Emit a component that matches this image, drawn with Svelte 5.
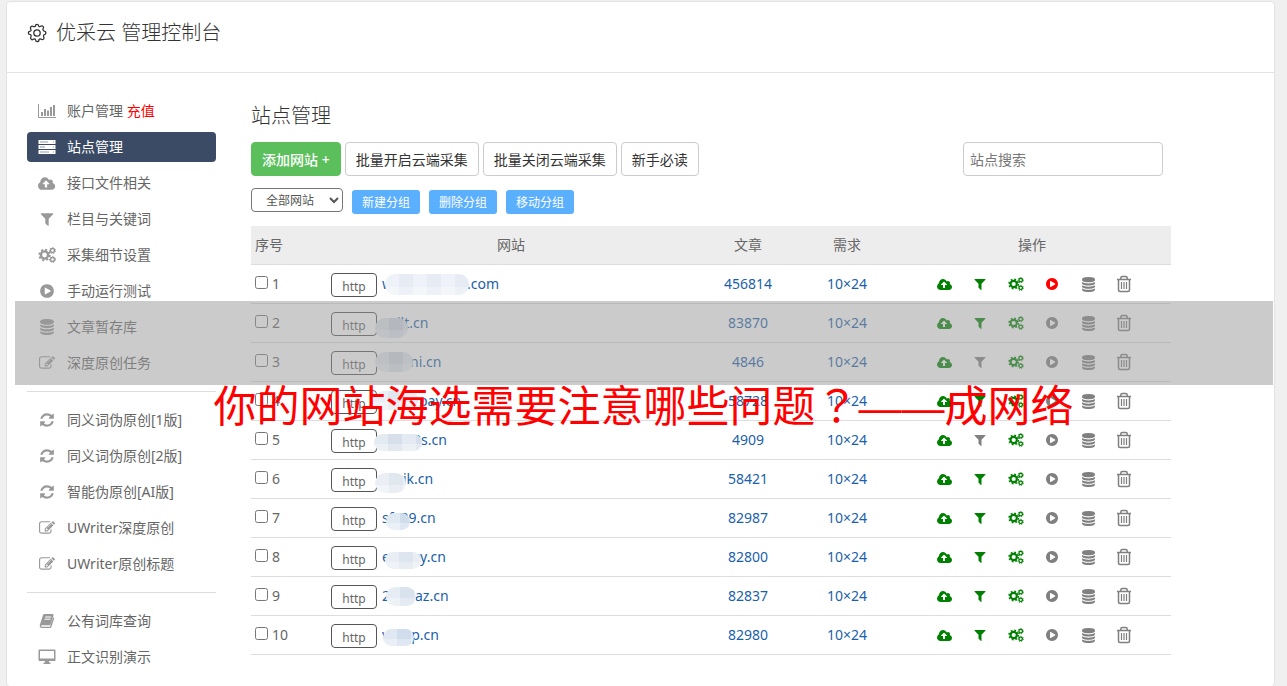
<script lang="ts">
	interface Site {
		id: number;
		pre: string;
		gap: number;
		post: string;
		// redaction blob, relative to the start of the domain
		mask: { x: number; y: number; w: number; h: number; tone: string };
		articles: number;
		filtered: boolean;
		running: boolean;
	}

	const menu = [
		[
			{ label: '账户管理', icon: 'chart', extra: '充值' },
			{ label: '站点管理', icon: 'server', active: true },
			{ label: '接口文件相关', icon: 'cloud' },
			{ label: '栏目与关键词', icon: 'filter' },
			{ label: '采集细节设置', icon: 'cogs' },
			{ label: '手动运行测试', icon: 'play' },
			{ label: '文章暂存库', icon: 'database' },
			{ label: '深度原创任务', icon: 'edit' }
		],
		[
			{ label: '同义词伪原创[1版]', icon: 'refresh' },
			{ label: '同义词伪原创[2版]', icon: 'refresh' },
			{ label: '智能伪原创[AI版]', icon: 'refresh' },
			{ label: 'UWriter深度原创', icon: 'edit' },
			{ label: 'UWriter原创标题', icon: 'edit' }
		],
		[
			{ label: '公有词库查询', icon: 'book' },
			{ label: '正文识别演示', icon: 'desktop' }
		]
	];

	const sites: Site[] = [
		{ id: 1, pre: 'w', gap: 74, post: '.com', mask: { x: 3, y: 0, w: 84, h: 21, tone: '#e6ebf4' }, articles: 456814, filtered: true, running: true },
		{ id: 2, pre: '', gap: 15, post: 'ilt.cn', mask: { x: -7, y: 5, w: 33, h: 20, tone: '#d0d9e4' }, articles: 83870, filtered: true, running: false },
		{ id: 3, pre: '', gap: 28, post: 'ni.cn', mask: { x: -7, y: 0, w: 38, h: 20, tone: '#d3dbe5' }, articles: 4846, filtered: false, running: false },
		{ id: 4, pre: '', gap: 37, post: 'pay.cn', mask: { x: -8, y: 0, w: 44, h: 19, tone: '#e1e7f0' }, articles: 58728, filtered: true, running: false },
		{ id: 5, pre: '', gap: 31, post: '8s.cn', mask: { x: -8, y: 4, w: 48, h: 17, tone: '#d6dfea' }, articles: 4909, filtered: false, running: false },
		{ id: 6, pre: '', gap: 21, post: 'ik.cn', mask: { x: -7, y: 4, w: 31, h: 20, tone: '#e1e7ef' }, articles: 58421, filtered: true, running: false },
		{ id: 7, pre: 'sf', gap: 7, post: '39.cn', mask: { x: 4, y: 5, w: 24, h: 17, tone: '#d0deec' }, articles: 82987, filtered: true, running: false },
		{ id: 8, pre: 'e', gap: 22, post: 'oy.cn', mask: { x: 3, y: 5, w: 36, h: 17, tone: '#dde5ee' }, articles: 82800, filtered: true, running: false },
		{ id: 9, pre: '2', gap: 25, post: 'az.cn', mask: { x: 4, y: 1, w: 30, h: 19, tone: '#d8e3ee' }, articles: 82837, filtered: true, running: false },
		{ id: 10, pre: 'v', gap: 22, post: 'p.cn', mask: { x: 1, y: 4, w: 31, h: 17, tone: '#d0ddec' }, articles: 82980, filtered: true, running: false }
	];

	let search = $state('');
	let group = $state('all');
	let selected = $state<number[]>([]);
</script>

{#snippet icon(name: string)}
	{#if name === 'chart'}
		<svg viewBox="0 0 18 16" width="18" height="16" aria-hidden="true">
			<path d="M.5 1v13.5H18" fill="none" stroke="currentColor" />
			<path d="M3 9h2v4H3zM6 6h2v7H6zM9 7.500h2V13H9zM12 4h2v9h-2zM15 2h2v11h-2z" />
		</svg>
	{:else if name === 'server'}
		<svg viewBox="0 0 18 16" width="18" height="16" aria-hidden="true">
			<path d="M.5 1h17v4H.5zM.5 6h17v4H.5zM.5 11h17v4H.5z" />
			<path d="M2 3h8M2 8h5M2 13h9M15 3h1M15 8h1M15 13h1" stroke="#8f9aad" />
		</svg>
	{:else if name === 'cloud'}
		<svg viewBox="0 0 1920 1792" class="wide" aria-hidden="true">
			<path d="M1280 992q0-14-9-23l-352-352q-9-9-23-9t-23 9l-351 351q-10 12-10 24 0 14 9 23t23 9h224v352q0 13 9.500 22.500t22.500 9.500h192q13 0 22.500-9.500t9.500-22.500v-352h224q13 0 22.500-9.500t9.500-22.500zm640 288q0 159-112.500 271.500t-271.500 112.500h-1088q-185 0-316.500-131.500t-131.500-316.500q0-130 70-240t188-165q-2-30-2-43 0-212 150-362t362-150q156 0 285.500 87t188.500 231q71-62 166-62 106 0 181 75t75 181q0 76-41 138 130 31 213.500 135.500t83.500 238.500z" />
		</svg>
	{:else if name === 'filter'}
		<svg viewBox="0 0 1792 1792" aria-hidden="true">
			<path d="M1595 295q17 41-14 70l-493 493v742q0 42-39 59-13 5-25 5-27 0-45-19l-256-256q-19-19-19-45v-486l-493-493q-31-29-14-70 17-39 59-39h1280q42 0 59 39z" />
		</svg>
	{:else if name === 'cogs'}
		<svg viewBox="0 0 18 16" class="wide" aria-hidden="true">
			<g fill="none" stroke="currentColor">
				<circle cx="6.500" cy="8" r="3.600" stroke-width="2.400" />
				<circle cx="6.500" cy="8" r="5.300" stroke-width="1.800" stroke-dasharray="2.080 2.080" />
				<circle cx="14.500" cy="3.600" r="2" stroke-width="1.500" />
				<circle cx="14.500" cy="3.600" r="3" stroke-width="1" stroke-dasharray="1.350 1.350" />
				<circle cx="14.500" cy="12.400" r="2" stroke-width="1.500" />
				<circle cx="14.500" cy="12.400" r="3" stroke-width="1" stroke-dasharray="1.350 1.350" />
			</g>
		</svg>
	{:else if name === 'play'}
		<svg viewBox="0 0 1792 1792" aria-hidden="true">
			<path d="M896 128q209 0 385.500 103t279.500 279.500 103 385.500-103 385.500-279.500 279.500-385.500 103-385.500-103-279.500-279.500-103-385.500 103-385.500 279.500-279.500 385.500-103zm384 823q32-18 32-55t-32-55l-544-320q-31-19-64-1-32 19-32 56v640q0 37 32 56 16 8 32 8 17 0 32-9z" />
		</svg>
	{:else if name === 'database'}
		<svg viewBox="0 0 1792 1792" class="tall" aria-hidden="true">
			<path d="M896 768q237 0 443-43t325-127v170q0 69-103 128t-280 93.500-385 34.500-385-34.500-280-93.500-103-128v-170q119 84 325 127t443 43zm0 768q237 0 443-43t325-127v170q0 69-103 128t-280 93.500-385 34.500-385-34.500-280-93.500-103-128v-170q119 84 325 127t443 43zm0-384q237 0 443-43t325-127v170q0 69-103 128t-280 93.500-385 34.500-385-34.500-280-93.500-103-128v-170q119 84 325 127t443 43zm0-1152q208 0 385 34.500t280 93.500 103 128v128q0 69-103 128t-280 93.500-385 34.500-385-34.500-280-93.500-103-128v-128q0-69 103-128t280-93.500 385-34.500z" />
		</svg>
	{:else if name === 'edit'}
		<svg viewBox="0 0 1792 1792" aria-hidden="true">
			<path d="M888 1184l116-116-152-152-116 116v56h96v96h56zm440-720q-16-16-33 1l-350 350q-17 17-1 33t33-1l350-350q17-17 1-33zm80 594v190q0 119-84.500 203.500t-203.500 84.500h-832q-119 0-203.500-84.500t-84.500-203.500v-832q0-119 84.500-203.500t203.500-84.500h832q63 0 117 25 15 7 18 23 3 17-9 29l-49 49q-14 14-32 8-23-6-45-6h-832q-66 0-113 47t-47 113v832q0 66 47 113t113 47h832q66 0 113-47t47-113v-126q0-13 9-22l64-64q15-15 35-7t20 29zm-96-738l288 288-672 672h-288v-288zm444 132l-92 92-288-288 92-92q28-28 68-28t68 28l152 152q28 28 28 68t-28 68z" />
		</svg>
	{:else if name === 'refresh'}
		<svg viewBox="0 0 1792 1792" aria-hidden="true">
			<path d="M1639 1056q0 5-1 7-64 268-268 434.500t-478 166.500q-146 0-282.500-55t-243.500-157l-129 129q-19 19-45 19t-45-19-19-45v-448q0-26 19-45t45-19h448q26 0 45 19t19 45-19 45l-137 137q71 66 161 102t187 36q134 0 250-65t186-179q11-17 53-117 8-23 30-23h192q13 0 22.500 9.500t9.500 22.500zm25-800v448q0 26-19 45t-45 19h-448q-26 0-45-19t-19-45 19-45l138-138q-148-137-349-137-134 0-250 65t-186 179q-11 17-53 117-8 23-30 23h-199q-13 0-22.500-9.500t-9.500-22.500v-7q65-268 270-434.500t480-166.500q146 0 284 55.500t245 156.500l130-129q19-19 45-19t45 19 19 45z" />
		</svg>
	{:else if name === 'book'}
		<svg viewBox="0 0 16 16" aria-hidden="true">
			<path d="M5.500 1h8.300q1 .2.700 1.300l-3 9.200q-.3.800-1.200.8H3q-.9 0-1 .7t1 .8h8l3.200-9.500q1.200.5.900 1.400l-2.700 8.300q-.4 1-1.400 1H2.800Q.3 14.600.8 12L4 2q.4-1 1.500-1z" />
			<path d="M6.200 4h6M5.500 6.200h6" stroke="#fff" />
		</svg>
	{:else if name === 'desktop'}
		<svg viewBox="0 0 18 16" width="18" height="16" aria-hidden="true">
			<path d="M1.500.500h15a1 1 0 0 1 1 1V11a1 1 0 0 1-1 1H11v1.500h1.500V15h-7v-1.500H7V12H1.500a1 1 0 0 1-1-1V1.500a1 1 0 0 1 1-1zM2 2v7.500h14V2z" fill-rule="evenodd" />
		</svg>
	{:else if name === 'trash'}
		<svg viewBox="0 0 16 18" width="16" height="18" aria-hidden="true">
			<path d="M1 4.500h14M4.800 4V3q0-1.500 1.500-1.500h3.400q1.500 0 1.500 1.500v1M2.500 4.500V15q0 1.500 1.500 1.500h8q1.500 0 1.500-1.500V4.500" fill="none" stroke="currentColor" stroke-width="1.500" />
			<path d="M5.500 7v7M8 7v7M10.500 7v7" fill="none" stroke="currentColor" stroke-width="1.200" />
		</svg>
	{:else if name === 'gear'}
		<svg viewBox="0 0 20 20" width="20" height="20" aria-hidden="true">
			<g fill="none" stroke="currentColor" stroke-width="1.300" stroke-linejoin="round">
				<circle cx="10" cy="10" r="3.200" />
				<path d="M8.300 3q.2-1.700 1.700-1.700T11.700 3q.1.900 1.500.5 1.800-1.300 2.900-.1 1 1.100-.1 2.700-.3.900.6 1.600l.8.500q1.500.3 1.500 1.800t-1.500 1.700q-1 .2-.9 1.600 1.100 1.800.1 2.800-1.200 1.200-2.800 0-1.200-.5-1.800.5-.1 2.100-1.700 2.100t-1.800-2q-.5-1.200-1.700-.6-1.600 1.200-2.700 0-1.200-1.100 0-2.800.3-1.400-.8-1.700-2-.1-2-1.600t2-1.800q1.100-.3.600-1.700-1.100-1.700 0-2.800t2.800-.1q1.500.4 1.900-.6z" />
			</g>
		</svg>
	{/if}
{/snippet}

<div class="panel">
	<header class="panel-header">
		{@render icon('gear')}
		<h1>优采云 管理控制台</h1>
	</header>

	<div class="panel-body">
		<nav class="sidebar">
			{#each menu as items, i}
				{#if i > 0}
					<hr />
				{/if}
				<ul>
					{#each items as item}
						<li>
							<a href="#{item.icon}" class="menu-item" class:active={item.active}>
								<span class="menu-icon">{@render icon(item.icon)}</span>
								<span>{item.label} {#if item.extra}<em>{item.extra}</em>{/if}</span>
							</a>
						</li>
					{/each}
				</ul>
			{/each}
		</nav>

		<main>
			<h2>站点管理</h2>

			<!-- Site actions -->
			<div class="toolbar">
				<button class="btn add">添加网站 +</button>
				<button class="btn">批量开启云端采集</button>
				<button class="btn">批量关闭云端采集</button>
				<button class="btn">新手必读</button>
				<input class="search" type="text" placeholder="站点搜索" aria-label="站点搜索" bind:value={search} />
			</div>

			<!-- Group actions -->
			<div class="groups">
				<select bind:value={group} aria-label="全部网站">
					<option value="all">全部网站</option>
				</select>
				<button class="group-btn">新建分组</button>
				<button class="group-btn">删除分组</button>
				<button class="group-btn">移动分组</button>
			</div>

			<table>
				<thead>
					<tr>
						<th class="col-id">序号</th>
						<th>网站</th>
						<th class="col-articles">文章</th>
						<th class="col-need">需求</th>
						<th class="col-actions">操作</th>
					</tr>
				</thead>
				<tbody>
					{#each sites as site (site.id)}
						<tr>
							<td>
								<label class="pick">
									<input type="checkbox" value={site.id} bind:group={selected} />
									{site.id}
								</label>
							</td>
							<td>
								<div class="site">
									<span class="scheme">http</span>
									<a href="#site-{site.id}" class="domain">{site.pre}<span class="gap" style:width="{site.gap}px"></span>{site.post}<span
											class="mask"
											style:left="{site.mask.x}px"
											style:top="{site.mask.y}px"
											style:width="{site.mask.w}px"
											style:height="{site.mask.h}px"
											style:background-color={site.mask.tone}
										></span></a>
								</div>
							</td>
							<td class="num"><a href="#articles-{site.id}">{site.articles}</a></td>
							<td class="num"><a href="#need-{site.id}">10×24</a></td>
							<td>
								<div class="actions">
									<button class="on" aria-label="cloud">{@render icon('cloud')}</button>
									<button class:on={site.filtered} aria-label="filter">{@render icon('filter')}</button>
									<button class="on" aria-label="settings">{@render icon('cogs')}</button>
									<button class:running={site.running} aria-label="run">{@render icon('play')}</button>
									<button aria-label="articles">{@render icon('database')}</button>
									<button aria-label="delete">{@render icon('trash')}</button>
								</div>
							</td>
						</tr>
					{/each}
				</tbody>
			</table>
		</main>
	</div>
</div>

<div class="band"></div>
<p class="caption">你的网站海选需要注意哪些问题<span class="mark">？</span><span class="dash">——</span>成网络</p>

<style>
	:global(body) {
		margin: 0;
		background: #f0f0f0;
		color: #666;
		font: 14px/20px 'Noto Sans', 'Noto Sans CJK SC', sans-serif;
	}

	button,
	input,
	select {
		box-sizing: border-box;
		margin: 0;
		font-family: inherit;
	}

	button {
		cursor: pointer;
	}

	a {
		color: #1b5faa;
		text-decoration: none;
	}

	svg {
		display: block;
		flex: none;
		fill: currentColor;
	}

	.panel {
		margin: 1px 12px 0 6px;
		border: 1px solid #e3e3e3;
		border-radius: 4px;
		background: #fff;
	}

	.panel-header {
		display: flex;
		align-items: center;
		gap: 9px;
		height: 62px;
		padding: 0 20px 8px;
		border-bottom: 1px solid #e3e3e3;
		color: #333;
	}

	h1,
	h2 {
		margin: 0;
		color: #333;
		font-size: 20px;
		font-weight: 300;
	}

	h2 {
		margin-bottom: 6px;
		line-height: 40px;
	}

	.panel-body {
		display: flex;
		gap: 35px;
		padding: 23px 20px 14px;
	}

	/* Sidebar */
	.sidebar {
		flex: none;
		width: 189px;
	}

	.sidebar ul {
		display: flex;
		flex-direction: column;
		gap: 6px;
		margin: 0;
		padding: 0;
		list-style: none;
	}

	.sidebar hr {
		margin: 13px 0;
		border: 0;
		border-top: 1px solid #ddd;
	}

	.menu-item {
		display: flex;
		align-items: center;
		gap: 10px;
		height: 30px;
		padding-left: 10px;
		border-radius: 4px;
		color: #666;
	}

	.menu-item em {
		color: #f00;
		font-style: normal;
	}

	.menu-icon {
		display: flex;
		justify-content: center;
		width: 20px;
		color: #999;
	}

	.menu-icon svg {
		height: 16px;
	}

	.menu-item.active,
	.menu-item.active .menu-icon {
		background: #3b4b66;
		color: #fff;
	}

	/* Main column */
	main {
		flex: 1;
		max-width: 920px;
	}

	.toolbar {
		display: flex;
		gap: 4px;
		margin-bottom: 12px;
	}

	.btn {
		height: 34px;
		padding: 0 10px;
		border: 1px solid #ccc;
		border-radius: 4px;
		background: #fff;
		color: #333;
		font-size: 14px;
		white-space: nowrap;
	}

	.btn.add {
		border-color: #5bc05b;
		background: #5bc05b;
		color: #fff;
		font-weight: 500;
	}

	.search {
		width: 200px;
		height: 34px;
		margin: 0 8px 0 auto;
		padding: 0 6px;
		border: 1px solid #ccc;
		border-radius: 4px;
		color: #333;
		font-size: 14px;
	}

	.search::placeholder {
		color: #777;
	}

	.groups {
		display: flex;
		align-items: flex-end;
		gap: 9px;
		margin-bottom: 12px;
	}

	.groups select {
		width: 92px;
		height: 24px;
		margin-bottom: 2px;
		padding: 0 0 0 10px;
		border: 1px solid #767676;
		border-radius: 4px;
		background: #fff;
		color: #555;
		font-size: 12px;
	}

	.group-btn {
		height: 24px;
		padding: 0 10px;
		border: 0;
		border-radius: 3px;
		background: #5bafff;
		color: #fff;
		font-size: 12px;
	}

	table {
		width: 100%;
		border-collapse: separate;
		border-spacing: 0;
		table-layout: fixed;
	}

	th,
	td {
		box-sizing: border-box;
		height: 39px;
		padding: 0 4px;
		border-bottom: 1px solid #ddd;
	}

	th {
		background: #ededed;
		font-weight: 400;
	}

	.col-id {
		width: 76px;
		text-align: left;
	}

	.col-articles {
		width: 106px;
	}

	.col-need {
		width: 92px;
	}

	.col-actions {
		width: 278px;
	}

	.num {
		text-align: center;
	}

	.pick {
		display: flex;
		gap: 4px;
	}

	.pick input {
		width: 13px;
		height: 13px;
		margin-top: 2px;
	}

	.site {
		display: flex;
		align-items: center;
		gap: 5px;
	}

	.scheme {
		box-sizing: border-box;
		width: 46px;
		height: 24px;
		margin-top: 2px;
		border: 1px solid #555;
		border-radius: 4px;
		font-size: 12px;
		line-height: 26px;
		text-align: center;
	}

	.domain {
		position: relative;
		white-space: nowrap;
	}

	.gap {
		display: inline-block;
	}

	.mask {
		position: absolute;
		border-radius: 10px;
		background-image:
			repeating-linear-gradient(90deg, rgba(255, 255, 255, 0.35) 0 14px, transparent 14px 28px),
			linear-gradient(transparent 60%, rgba(255, 255, 255, 0.3) 60%);
	}

	.actions {
		display: flex;
		justify-content: center;
		gap: 20px;
		padding-left: 4px;
	}

	.actions button {
		display: flex;
		align-items: center;
		justify-content: center;
		width: 16px;
		height: 18px;
		padding: 0;
		border: 0;
		background: none;
		color: #808080;
	}

	.actions button.on {
		color: #008000;
	}

	.actions button.running {
		color: #f00;
	}

	.actions svg:not([width]) {
		height: 14px;
	}

	.actions svg.tall {
		height: 15px;
	}

	/* Banner laid over the page */
	.band {
		position: absolute;
		top: 301px;
		right: 14px;
		left: 15px;
		height: 84px;
		background: rgba(151, 151, 151, 0.5);
		pointer-events: none;
	}

	.caption {
		position: absolute;
		top: 373px;
		right: 0;
		left: 0;
		margin: 0;
		color: #f00;
		font-family: 'Noto Sans CJK SC', sans-serif;
		font-size: 43px;
		line-height: 60px;
		text-align: center;
		pointer-events: none;
	}

	.mark {
		font-family: 'Noto Sans CJK TC', sans-serif;
	}

	.dash {
		font-family: 'Liberation Sans', sans-serif;
	}
</style>
